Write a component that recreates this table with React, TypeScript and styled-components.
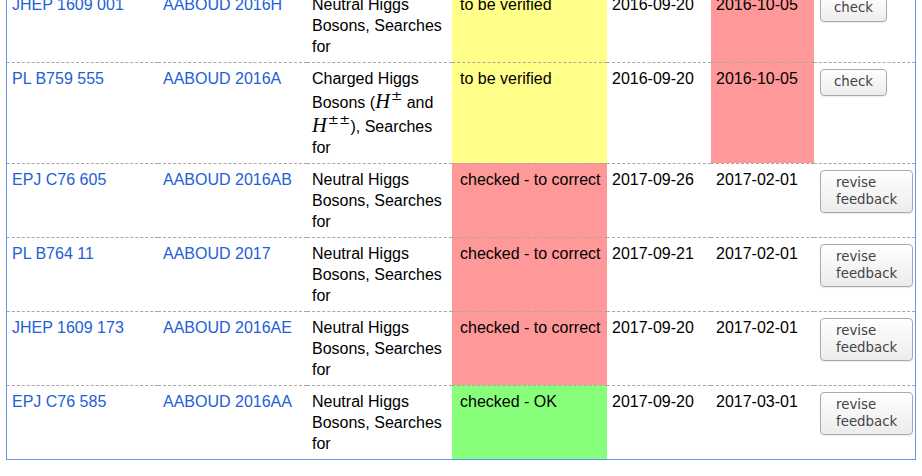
import React from "react";
import styled, { createGlobalStyle } from "styled-components";

const GlobalStyle = createGlobalStyle`
  html, body { margin: 0; padding: 0; background: #fff; }
  body { font-family: "Liberation Sans", Arial, sans-serif; font-size: 16px; color: #000; overflow: hidden; }
`;

const Table = styled.table`
  margin: -13px 0 0 6px;
  width: 910px;
  table-layout: fixed;
  border-collapse: separate;
  border-spacing: 0;
  border: 1px solid #6495ed;
  font-family: "Liberation Sans", Arial, sans-serif;
  font-size: 16px;
  line-height: 21px;
`;

const Cell = styled.td<{ $bg?: string; $padLeft?: number }>`
  vertical-align: top;
  padding: 5px 5px 5px ${(p) => p.$padLeft ?? 5}px;
  border-top: 1px dashed #a8a8a8;
  background: ${(p) => p.$bg ?? "transparent"};
  overflow: hidden;
`;

const Link = styled.a`
  color: #2360d6;
  text-decoration: none;
`;

const Button = styled.button<{ $wide?: boolean }>`
  margin: 1px 0 0 1px;
  padding: 4px ${(p) => (p.$wide ? "14px 4px 15px" : "13px")};
  width: ${(p) => (p.$wide ? "93px" : "auto")};
  font-family: "DejaVu Sans", sans-serif;
  font-size: 13.33px;
  line-height: 16.5px;
  color: #444;
  text-align: left;
  border: 1px solid #aaa;
  border-radius: 4px;
  background: linear-gradient(#ffffff, #ececec);
  box-shadow: 0 1px 1px rgba(0, 0, 0, 0.08);
`;

const Math = styled.span`
  font-family: "Liberation Serif", "Times New Roman", serif;
  line-height: 12px;
`;

const MathVar = styled.i`
  font-size: 20.5px;
  font-style: italic;
`;

const MathSup = styled.span`
  font-family: "DejaVu Serif", serif;
  font-size: 13.5px;
  vertical-align: 8px;
  line-height: 13.4px;
  margin-left: 1px;
`;

const colWidths = [151, 149, 145, 155, 104, 103, 101];

const YELLOW = "#ffff8a";
const RED = "#ff9999";
const GREEN = "#88ff7a";

type Row = {
  ref: string;
  key: string;
  title: React.ReactNode;
  status: string;
  statusBg: string;
  date1: string;
  date2: string;
  date2Bg?: string;
  action: string;
};

const H = ({ sup }: { sup: string }) => (
  <Math>
    <MathVar>H</MathVar>
    <MathSup>{sup}</MathSup>
  </Math>
);

const neutral = "Neutral Higgs Bosons, Searches for";

const rows: Row[] = [
  { ref: "JHEP 1609 001", key: "AABOUD 2016H", title: neutral, status: "to be verified", statusBg: YELLOW, date1: "2016-09-20", date2: "2016-10-05", date2Bg: RED, action: "check" },
  {
    ref: "PL B759 555",
    key: "AABOUD 2016A",
    title: (
      <>
        Charged Higgs Bosons (<H sup="±" /> and <H sup="±±" />), Searches for
      </>
    ),
    status: "to be verified",
    statusBg: YELLOW,
    date1: "2016-09-20",
    date2: "2016-10-05",
    date2Bg: RED,
    action: "check",
  },
  { ref: "EPJ C76 605", key: "AABOUD 2016AB", title: neutral, status: "checked - to correct", statusBg: RED, date1: "2017-09-26", date2: "2017-02-01", action: "revise feedback" },
  { ref: "PL B764 11", key: "AABOUD 2017", title: neutral, status: "checked - to correct", statusBg: RED, date1: "2017-09-21", date2: "2017-02-01", action: "revise feedback" },
  { ref: "JHEP 1609 173", key: "AABOUD 2016AE", title: neutral, status: "checked - to correct", statusBg: RED, date1: "2017-09-20", date2: "2017-02-01", action: "revise feedback" },
  { ref: "EPJ C76 585", key: "AABOUD 2016AA", title: neutral, status: "checked - OK", statusBg: GREEN, date1: "2017-09-20", date2: "2017-03-01", action: "revise feedback" },
];

export default function App() {
  return (
    <>
      <GlobalStyle />
      <Table>
        <colgroup>
          {colWidths.map((w, i) => (
            <col key={i} style={{ width: w }} />
          ))}
        </colgroup>
        <tbody>
          {rows.map((r) => (
            <tr key={r.ref}>
              <Cell><Link href="#">{r.ref}</Link></Cell>
              <Cell><Link href="#">{r.key}</Link></Cell>
              <Cell>{r.title}</Cell>
              <Cell $bg={r.statusBg} $padLeft={8}>{r.status}</Cell>
              <Cell>{r.date1}</Cell>
              <Cell $bg={r.date2Bg}>{r.date2}</Cell>
              <Cell>
                <Button $wide={r.action !== "check"}>{r.action}</Button>
              </Cell>
            </tr>
          ))}
        </tbody>
      </Table>
    </>
  );
}
